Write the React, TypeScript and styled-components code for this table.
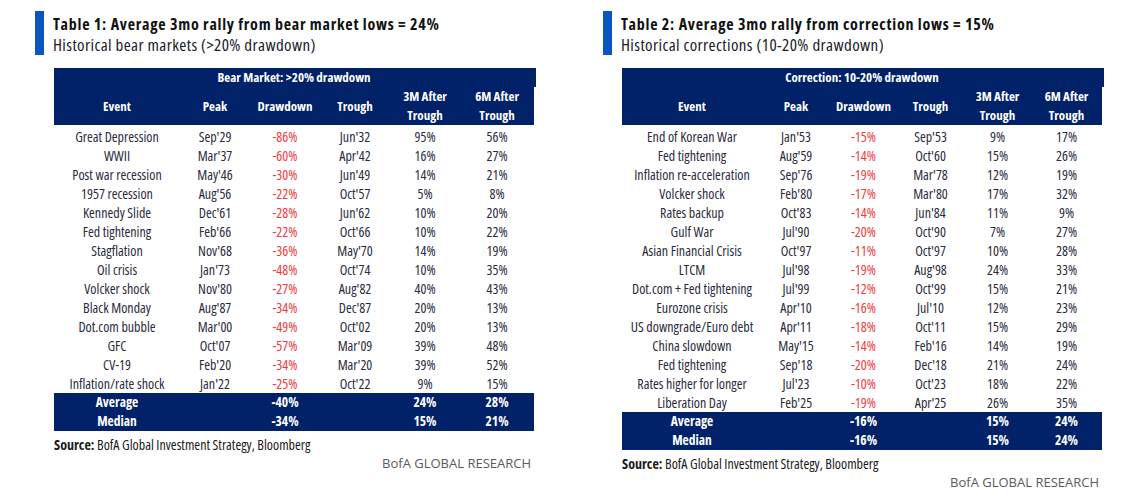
import React from 'react'
import styled, { createGlobalStyle } from 'styled-components'

const NAVY = '#012169'
const FONT = '"Open Sans", "DejaVu Sans Condensed", sans-serif'

const GlobalStyle = createGlobalStyle`
  body {
    margin: 0;
    background: #ffffff;
    font-family: ${FONT};
    font-stretch: 75%;
  }
`

type Row = [string, string, string, string, string, string]

const bearRows: Row[] = [
    ['Great Depression', "Sep'29", '-86%', "Jun'32", '95%', '56%'],
    ['WWII', "Mar'37", '-60%', "Apr'42", '16%', '27%'],
    ['Post war recession', "May'46", '-30%', "Jun'49", '14%', '21%'],
    ['1957 recession', "Aug'56", '-22%', "Oct'57", '5%', '8%'],
    ['Kennedy Slide', "Dec'61", '-28%', "Jun'62", '10%', '20%'],
    ['Fed tightening', "Feb'66", '-22%', "Oct'66", '10%', '22%'],
    ['Stagflation', "Nov'68", '-36%', "May'70", '14%', '19%'],
    ['Oil crisis', "Jan'73", '-48%', "Oct'74", '10%', '35%'],
    ['Volcker shock', "Nov'80", '-27%', "Aug'82", '40%', '43%'],
    ['Black Monday', "Aug'87", '-34%', "Dec'87", '20%', '13%'],
    ['Dot.com bubble', "Mar'00", '-49%', "Oct'02", '20%', '13%'],
    ['GFC', "Oct'07", '-57%', "Mar'09", '39%', '48%'],
    ['CV-19', "Feb'20", '-34%', "Mar'20", '39%', '52%'],
    ['Inflation/rate shock', "Jan'22", '-25%', "Oct'22", '9%', '15%'],
]

const correctionRows: Row[] = [
    ['End of Korean War', "Jan'53", '-15%', "Sep'53", '9%', '17%'],
    ['Fed tightening', "Aug'59", '-14%', "Oct'60", '15%', '26%'],
    ['Inflation re-acceleration', "Sep'76", '-19%', "Mar'78", '12%', '19%'],
    ['Volcker shock', "Feb'80", '-17%', "Mar'80", '17%', '32%'],
    ['Rates backup', "Oct'83", '-14%', "Jun'84", '11%', '9%'],
    ['Gulf War', "Jul'90", '-20%', "Oct'90", '7%', '27%'],
    ['Asian Financial Crisis', "Oct'97", '-11%', "Oct'97", '10%', '28%'],
    ['LTCM', "Jul'98", '-19%', "Aug'98", '24%', '33%'],
    ['Dot.com + Fed tightening', "Jul'99", '-12%', "Oct'99", '15%', '21%'],
    ['Eurozone crisis', "Apr'10", '-16%', "Jul'10", '12%', '23%'],
    ['US downgrade/Euro debt', "Apr'11", '-18%', "Oct'11", '15%', '29%'],
    ['China slowdown', "May'15", '-14%', "Feb'16", '14%', '19%'],
    ['Fed tightening', "Sep'18", '-20%', "Dec'18", '21%', '24%'],
    ['Rates higher for longer', "Jul'23", '-10%', "Oct'23", '18%', '22%'],
    ['Liberation Day', "Feb'25", '-19%', "Apr'25", '26%', '35%'],
]

const Page = styled.div`
  display: flex;
  gap: 68px;
  padding: 11px 0 0 35px;
`

const Panel = styled.section`
  width: 500px;
  display: flex;
  flex-direction: column;
`

const TitleBlock = styled.div`
  display: flex;
  gap: 9px;
`

const Accent = styled.div`
  width: 9px;
  height: 44px;
  flex-shrink: 0;
  background: #0a55c4;
`

const Titles = styled.div`
  display: flex;
  flex-direction: column;
  padding-top: 4px;
  white-space: nowrap;
`

const Title = styled.div`
  font-size: 16px;
  font-weight: 700;
  letter-spacing: 0.75px;
  color: #111;
  line-height: 19px;
`

const Subtitle = styled.div`
  font-size: 17px;
  letter-spacing: 0.4px;
  color: #1a1a2a;
  line-height: 21px;
`

const Table = styled.table`
  margin: 13px 0 0 19px;
  width: 480px;
  border-collapse: collapse;
  table-layout: fixed;
  font-size: 14px;
  font-stretch: 78%;
`

const HeadCell = styled.th`
  background: ${NAVY};
  color: #fff;
  font-weight: 700;
  font-size: 13px;
  line-height: 19px;
  padding: 0;
  text-align: center;
`

// the group row pokes out a couple of pixels past the column row
const GroupCell = styled(HeadCell)`
  height: 19px;
  box-shadow: 2px 0 0 ${NAVY};
`

const ColCell = styled(HeadCell)`
  height: 37px;
  vertical-align: middle;
`

const BodyCell = styled.td<{ $neg?: boolean }>`
  height: 19px;
  padding: 0;
  text-align: center;
  line-height: 19px;
  color: ${p => (p.$neg ? '#f23a3c' : '#2b2b3d')};
  white-space: nowrap;
`

const FirstBody = styled.tr`
  td { padding-top: 2px; }
`

const SummaryCell = styled.td`
  height: 19px;
  padding: 0;
  text-align: center;
  line-height: 19px;
  background: ${NAVY};
  color: #fff;
  font-weight: 700;
  font-size: 13.5px;
`

const Source = styled.div`
  margin: 5px 0 0 19px;
  font-size: 14px;
  color: #1a1a1a;
  line-height: 18px;
  b { font-weight: 700; }
`

const Brand = styled.div`
  align-self: flex-end;
  margin-right: 4px;
  font-size: 13px;
  font-stretch: 100%;
  color: #5a5a5a;
  line-height: 18px;
`

const headers = ['Event', 'Peak', 'Drawdown', 'Trough']

const DataTable = ({ group, widths, rows, avg, med }: {
    group: string, widths: number[], rows: Row[], avg: string[], med: string[]
}) => (
    <Table>
        <colgroup>
            {widths.map((w, i) => <col key={i} style={{ width: w }} />)}
        </colgroup>
        <thead>
            <tr>
                <GroupCell colSpan={6}>{group}</GroupCell>
            </tr>
            <tr>
                {headers.map(h => <ColCell key={h}>{h}</ColCell>)}
                <ColCell>3M After<br />Trough</ColCell>
                <ColCell>6M After<br />Trough</ColCell>
            </tr>
        </thead>
        <tbody>
            {rows.map((r, i) => {
                const cells = r.map((c, j) => <BodyCell key={j} $neg={j === 2}>{c}</BodyCell>)
                return i === 0 ? <FirstBody key={i}>{cells}</FirstBody> : <tr key={i}>{cells}</tr>
            })}
            {[avg, med].map((s, i) => (
                <tr key={'s' + i}>
                    {s.map((c, j) => <SummaryCell key={j}>{c}</SummaryCell>)}
                </tr>
            ))}
        </tbody>
    </Table>
)

export default function App() {
    return <>
        <GlobalStyle />
        <Page>
            <Panel>
                <TitleBlock>
                    <Accent />
                    <Titles>
                        <Title>Table 1: Average 3mo rally from bear market lows = 24%</Title>
                        <Subtitle>Historical bear markets (&gt;20% drawdown)</Subtitle>
                    </Titles>
                </TitleBlock>
                <DataTable
                    group="Bear Market: >20% drawdown"
                    widths={[126, 70, 70, 70, 70, 74]}
                    rows={bearRows}
                    avg={['Average', '', '-40%', '', '24%', '28%']}
                    med={['Median', '', '-34%', '', '15%', '21%']}
                />
                <Source><b>Source:</b> BofA Global Investment Strategy, Bloomberg</Source>
                <Brand>BofA GLOBAL RESEARCH</Brand>
            </Panel>
            <Panel>
                <TitleBlock>
                    <Accent />
                    <Titles>
                        <Title>Table 2: Average 3mo rally from correction lows = 15%</Title>
                        <Subtitle>Historical corrections (10-20% drawdown)</Subtitle>
                    </Titles>
                </TitleBlock>
                <DataTable
                    group="Correction: 10-20% drawdown"
                    widths={[140, 68, 67, 67, 67, 71]}
                    rows={correctionRows}
                    avg={['Average', '', '-16%', '', '15%', '24%']}
                    med={['Median', '', '-16%', '', '15%', '24%']}
                />
                <Source><b>Source:</b> BofA Global Investment Strategy, Bloomberg</Source>
                <Brand>BofA GLOBAL RESEARCH</Brand>
            </Panel>
        </Page>
    </>
}
